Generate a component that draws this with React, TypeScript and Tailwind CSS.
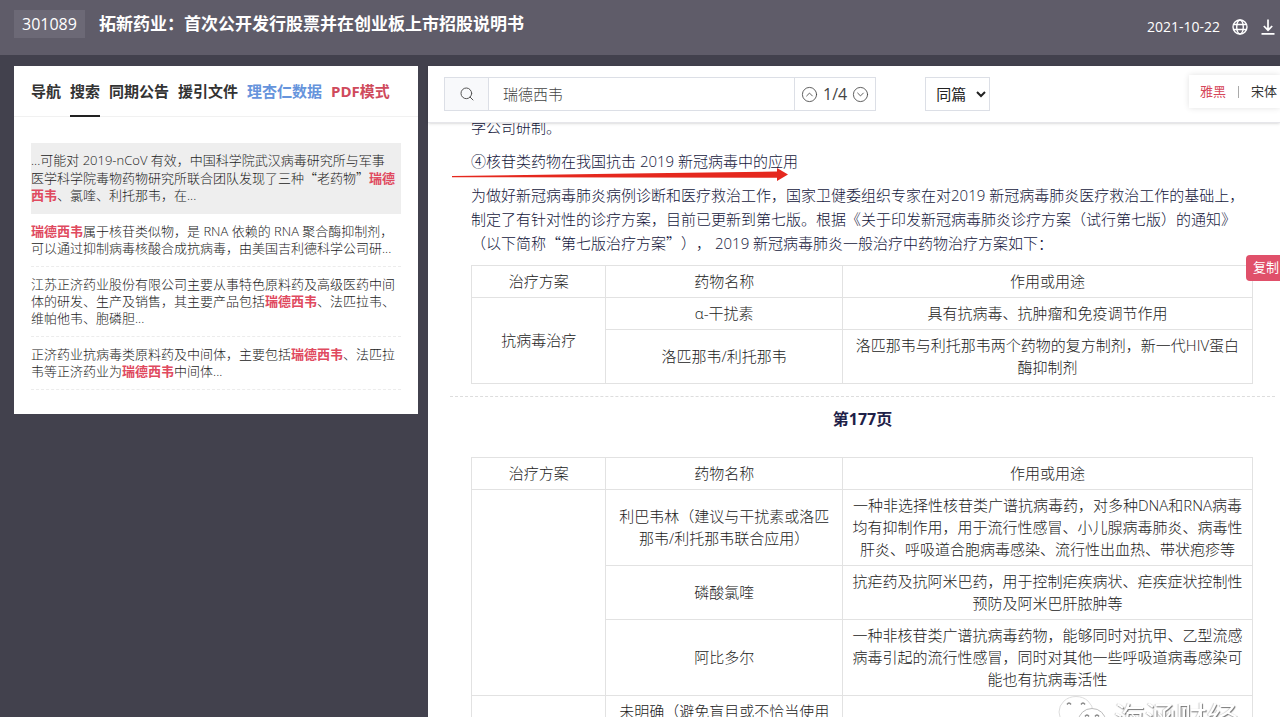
import React from "react";
import { CircleChevronDown, CircleChevronUp, Search } from "lucide-react";

const KEYWORD = "瑞德西韦";

const tabs = [
  { label: "导航", style: "text-[#333]" },
  { label: "搜索", style: "text-[#333]", active: true },
  { label: "同期公告", style: "text-[#333]" },
  { label: "援引文件", style: "text-[#333]" },
  { label: "理杏仁数据", style: "text-[#6694dc]" },
  { label: "PDF模式", style: "text-[#cf4a5c]" },
];

const results = [
  "...可能对 2019-nCoV 有效，中国科学院武汉病毒研究所与军事\n医学科学院毒物药物研究所联合团队发现了三种“老药物”瑞德西韦、氯喹、利托那韦，在...",
  "瑞德西韦属于核苷类似物，是 RNA 依赖的 RNA 聚合酶抑制剂，\n可以通过抑制病毒核酸合成抗病毒，由美国吉利德科学公司研...",
  "江苏正济药业股份有限公司主要从事特色原料药及高级医药中间\n体的研发、生产及销售，其主要产品包括瑞德西韦、法匹拉韦、\n维帕他韦、胞磷胆...",
  "正济药业抗病毒类原料药及中间体，主要包括瑞德西韦、法匹拉\n韦等正济药业为瑞德西韦中间体...",
];

const paragraph =
  "为做好新冠病毒肺炎病例诊断和医疗救治工作，国家卫健委组织专家在对2019 新冠病毒肺炎医疗救治工作的基础上，\n制定了有针对性的诊疗方案，目前已更新到第七版。根据《关于印发新冠病毒肺炎诊疗方案（试行第七版）的通知》\n（以下简称“第七版治疗方案”）， 2019 新冠病毒肺炎一般治疗中药物治疗方案如下：";

type Drug = { name: string; usage: string };
type Group = { plan: string; drugs: Drug[] };

const page176: Group[] = [
  {
    plan: "抗病毒治疗",
    drugs: [
      { name: "α-干扰素", usage: "具有抗病毒、抗肿瘤和免疫调节作用" },
      {
        name: "洛匹那韦/利托那韦",
        usage: "洛匹那韦与利托那韦两个药物的复方制剂，新一代HIV蛋白\n酶抑制剂",
      },
    ],
  },
];

const page177: Group[] = [
  {
    plan: "",
    drugs: [
      {
        name: "利巴韦林（建议与干扰素或洛匹\n那韦/利托那韦联合应用）",
        usage:
          "一种非选择性核苷类广谱抗病毒药，对多种DNA和RNA病毒\n均有抑制作用，用于流行性感冒、小儿腺病毒肺炎、病毒性\n肝炎、呼吸道合胞病毒感染、流行性出血热、带状疱疹等",
      },
      {
        name: "磷酸氯喹",
        usage: "抗疟药及抗阿米巴药，用于控制疟疾病状、疟疾症状控制性\n预防及阿米巴肝脓肿等",
      },
      {
        name: "阿比多尔",
        usage:
          "一种非核苷类广谱抗病毒药物，能够同时对抗甲、乙型流感\n病毒引起的流行性感冒，同时对其他一些呼吸道病毒感染可\n能也有抗病毒活性",
      },
    ],
  },
  { plan: "", drugs: [{ name: "未明确（避免盲目或不恰当使用", usage: "" }] },
];

// Curly quotes take the full-width CJK form, keywords are highlighted
const RichText = ({ text }: { text: string }) => (
  <>
    {text.split(/(瑞德西韦|[“”])/).map((part, index) => {
      if (part === KEYWORD) {
        return (
          <b key={index} className="font-bold text-[#e04a5f]">
            {part}
          </b>
        );
      }
      if (part === "“" || part === "”") {
        return (
          <span key={index} className="font-['Noto_Sans_CJK_SC',sans-serif]">
            {part}
          </span>
        );
      }
      return part;
    })}
  </>
);

const Header = () => (
  <header className="flex h-[55px] shrink-0 items-start bg-[#5f5c69] pl-[14px] pr-1 text-white">
    <span className="mt-[10px] bg-[#6c6976] px-2 text-base leading-7">301089</span>
    <h1 className="ml-[14px] mt-[10px] text-[17px] font-bold leading-7">
      拓新药业：首次公开发行股票并在创业板上市招股说明书
    </h1>
    <div className="ml-auto mt-[13px] flex items-center gap-3">
      <time className="text-sm leading-7">2021-10-22</time>
      <button type="button" aria-label="语言">
        <svg className="size-4" viewBox="0 0 16 16" fill="none" stroke="currentColor" strokeWidth="1.4">
          <circle cx="8" cy="8" r="7" />
          <ellipse cx="8" cy="8" rx="3.3" ry="7" />
          <path d="M1.5 5.5h13M1.5 10.5h13" />
        </svg>
      </button>
      <button type="button" aria-label="下载">
        <svg className="size-4" viewBox="0 0 16 16" fill="none" stroke="currentColor" strokeWidth="1.7">
          <path d="M8 0.5v10.5M3.800 7l4.200 4.200L12.200 7M1.500 14.800h13" />
        </svg>
      </button>
    </div>
  </header>
);

const Sidebar = () => (
  <aside className="w-[404px] shrink-0 self-start bg-white pb-6">
    <nav className="flex h-[51px] gap-[9px] border-b border-[#f1f1f1] px-[17px]">
      {tabs.map((tab) => (
        <a
          key={tab.label}
          href="#"
          className={`-mb-px whitespace-nowrap border-b-2 text-[15px] font-bold leading-[50px] ${tab.style} ${
            tab.active ? "border-[#222]" : "border-transparent"
          }`}
        >
          {tab.label}
        </a>
      ))}
    </nav>

    <ul className="mx-[17px] mt-[26px] text-[13px] font-light leading-[17px] text-[#222]">
      {results.map((text, index) => (
        <li
          key={index}
          className={`whitespace-pre-line border-b py-[9px] ${
            index === 0 ? "border-[#eee] bg-[#eee]" : "border-dashed border-[#ececec]"
          }`}
        >
          <RichText text={text} />
        </li>
      ))}
    </ul>
  </aside>
);

const Toolbar = () => (
  <div className="relative z-10 flex h-[57px] items-start border-b border-[#e6e6ea] bg-white pl-4 pt-[11px] shadow-sm">
    <div className="flex h-[34px] border border-[#dcdfe6]">
      <label
        htmlFor="keyword"
        className="flex w-11 items-center justify-center border-r border-[#dcdfe6] bg-[#f8f9fb] text-[#555]"
      >
        <Search size={16} strokeWidth={1.5} />
      </label>
      <input
        id="keyword"
        aria-label="搜索"
        defaultValue={KEYWORD}
        className="w-[306px] border-r border-[#dcdfe6] px-[14px] text-[15px] font-light text-[#444] outline-none"
      />
      <div className="flex items-center gap-[5px] px-[6px] text-base text-[#444]">
        <button type="button" aria-label="上一个">
          <CircleChevronUp size={17} strokeWidth={1.2} />
        </button>
        <span>1/4</span>
        <button type="button" aria-label="下一个">
          <CircleChevronDown size={17} strokeWidth={1.2} />
        </button>
      </div>
    </div>

    <select
      aria-label="搜索范围"
      className="ml-[49px] h-[34px] w-[65px] border border-[#dcdfe6] bg-white pl-[6px] text-[15px] text-[#222]"
    >
      <option>同篇</option>
    </select>

    <div className="-mt-[2px] ml-auto flex h-[33px] items-center bg-white pl-[11px] pr-[3px] text-[13px] shadow-[0_0_6px_rgba(0,0,0,0.12)]">
      <button type="button" className="text-[#d6475a]">
        雅黑
      </button>
      <span className="mx-3 h-3 w-px bg-[#aaa]" />
      <button type="button" className="text-[#333]">
        宋体
      </button>
    </div>
  </div>
);

const cell = "border border-[#e2e2e2] px-[5px] pb-[5px] pt-1 font-light";

const DrugTable = ({ groups }: { groups: Group[] }) => (
  <table className="w-full table-fixed border-collapse whitespace-pre-line text-center text-[15px] leading-[22px] text-[#222]">
    <thead>
      <tr>
        <th className={`${cell} w-[17.2%]`}>治疗方案</th>
        <th className={`${cell} w-[30.3%]`}>药物名称</th>
        <th className={cell}>作用或用途</th>
      </tr>
    </thead>
    <tbody>
      {groups.map((group, g) =>
        group.drugs.map((drug, d) => (
          <tr key={`${g}-${d}`}>
            {d === 0 && (
              <td rowSpan={group.drugs.length} className={cell}>
                {group.plan}
              </td>
            )}
            <td className={cell}>{drug.name}</td>
            <td className={cell}>{drug.usage}</td>
          </tr>
        ))
      )}
    </tbody>
  </table>
);

const RedArrow = () => (
  <svg
    className="pointer-events-none absolute -left-5 top-4 h-4 w-[340px]"
    viewBox="0 0 340 16"
    fill="#e5281e"
    aria-hidden="true"
  >
    <path d="M1 11L180 8.400L326 6.500V3L337 9.500L326 16V12.800L180 12.500L1 12.200Z" />
  </svg>
);

const Watermark = () => (
  <div className="pointer-events-none fixed bottom-0 right-[42px] flex h-[22px] items-start gap-2 overflow-hidden">
    <svg className="h-11 w-12 shrink-0" viewBox="0 0 48 44" fill="#fff" stroke="#bbb" strokeWidth="1">
      <ellipse cx="18" cy="17" rx="17" ry="15.500" stroke="#ddd" />
      <path d="M9 9.500q2-3 4 0M23 9.500q2-3 4 0" fill="none" stroke="#888" strokeWidth="1.400" />
      <ellipse cx="34" cy="26" rx="13.500" ry="12.500" />
      <path d="M27 21.500q2-3 4 0M37 21.500q2-3 4 0" fill="none" stroke="#888" strokeWidth="1.400" />
    </svg>
    <span className="mt-[6px] text-[31px] leading-8 text-white [text-shadow:1px_1px_1px_#777,-1px_0_1px_#ccc]">
      海涵财经
    </span>
  </div>
);

const Reader = () => (
  <main className="flex min-w-0 flex-1 flex-col bg-white">
    <Toolbar />
    <div className="-mt-2 min-h-0 flex-1 overflow-hidden pl-[22px] pr-[5px]">
      <div className="pl-[21px] pr-[22px] text-[15px] font-light leading-6 text-[#14173c]">
        <p className="mb-[10px]">学公司研制。</p>
        <h2 className="relative mb-[10px]">
          ④核苷类药物在我国抗击 2019 新冠病毒中的应用
          <RedArrow />
        </h2>
        <p className="mb-[10px] whitespace-pre [text-spacing-trim:space-all]">
          <RichText text={paragraph} />
        </p>
        <DrugTable groups={page176} />
      </div>

      <div className="mt-3 border-t border-dashed border-[#ddd] pb-[26px] pt-[10px] text-center text-base font-bold leading-6 text-[#1e2148]">
        第177页
      </div>

      <div className="pl-[21px] pr-[22px]">
        <DrugTable groups={page177} />
      </div>
    </div>
  </main>
);

const App = () => {
  return (
    <div
      lang="zh-CN"
      className="flex h-screen flex-col overflow-hidden bg-[#42414d] font-['Open_Sans','Noto_Sans_CJK_SC',sans-serif]"
    >
      <Header />
      <div className="flex min-h-0 flex-1 gap-[10px] pl-[14px] pt-[11px]">
        <Sidebar />
        <Reader />
      </div>
      <button
        type="button"
        className="fixed right-0 top-[255px] z-20 h-[26px] w-[34px] whitespace-nowrap rounded-l-sm bg-[#e0506a] pl-[7px] text-left text-[13px] text-white"
      >
        复制
      </button>
      <Watermark />
    </div>
  );
};

export default App;
